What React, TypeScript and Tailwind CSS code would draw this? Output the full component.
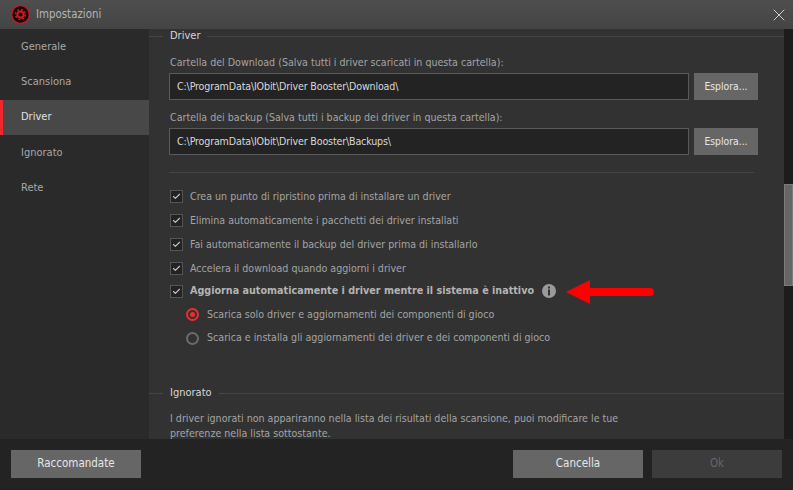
import React from 'react';
import { X, Check } from 'lucide-react';

const navItems = ['Generale', 'Scansiona', 'Driver', 'Ignorato', 'Rete'];

const checks = [
  'Crea un punto di ripristino prima di installare un driver',
  'Elimina automaticamente i pacchetti dei driver installati',
  'Fai automaticamente il backup del driver prima di installarlo',
  'Accelera il download quando aggiorni i driver',
];

const Logo = () => (
  <svg width="19" height="19" viewBox="0 0 19 19">
    <circle cx="9.5" cy="9.5" r="8.8" fill="#140808" stroke="#d0161c" strokeWidth="1.3" />
    <circle cx="9.5" cy="9.5" r="3.2" fill="none" stroke="#c81a20" strokeWidth="2.2" />
    <circle cx="9.5" cy="9.5" r="5" fill="none" stroke="#c81a20" strokeWidth="1.4" strokeDasharray="2 1.9" />
    <circle cx="9.5" cy="9.5" r="1.2" fill="#140808" />
  </svg>
);

const InfoIcon = () => (
  <svg width="14" height="14" viewBox="0 0 14 14" className="ml-[8px] shrink-0">
    <circle cx="7" cy="7" r="7" fill="#9a9a9a" />
    <rect x="6" y="2.5" width="2" height="2" fill="#323232" />
    <rect x="6" y="5.5" width="2" height="6" fill="#323232" />
  </svg>
);

const Arrow = () => (
  <svg width="88" height="24" viewBox="0 0 88 24" className="absolute left-[417px] top-0">
    <path d="M0 12 L24 0 V8 H84 a4 4 0 0 1 0 8 H24 V24 Z" fill="#fe0000" />
  </svg>
);

const Section = ({ title, children }: { title: string; children: React.ReactNode }) => (
  <div>
    <div className="flex items-center gap-[7px]">
      <div className="h-px w-[14px] bg-[#454545]" />
      <span className="text-[11px] leading-[14px] text-[#d6d6d6]">{title}</span>
      <div className="h-px flex-1 bg-[#454545]" />
    </div>
    {children}
  </div>
);

const PathRow = ({ label, value }: { label: string; value: string }) => (
  <div>
    <div className="pl-[21px] text-[10.6px] leading-[14px] text-[#a4a4a4]">{label}</div>
    <div className="mt-[4px] flex gap-[5px] pl-[20px]">
      <div className="flex h-[27px] w-[520px] items-center border border-[#5a5a5a] bg-[#232323] pl-[7px] text-[10.6px] tracking-[-0.15px] text-[#d8d8d8]">
        {value}
      </div>
      <button className="h-[27px] w-[64px] bg-[#666666] text-[10.3px] text-[#e6e6e6]">Esplora...</button>
    </div>
  </div>
);

const CheckBox = () => (
  <div className="flex h-[13px] w-[13px] shrink-0 items-center justify-center border border-[#555555] bg-[#232323]">
    <Check size={9} strokeWidth={3} className="text-[#c4c4c4]" />
  </div>
);

const CheckRow = ({ label }: { label: string }) => (
  <div className="flex h-[24px] items-center gap-[7px] pl-[21px]">
    <CheckBox />
    <span className="pt-[2px] text-[10.6px] text-[#a4a4a4]">{label}</span>
  </div>
);

const RadioRow = ({ label, on, height }: { label: string; on?: boolean; height: string }) => (
  <div className={`flex items-center gap-[8px] pl-[37px] ${height}`}>
    {on ? (
      <div className="flex h-[13px] w-[13px] items-center justify-center rounded-full border-2 border-[#f02c30]">
        <div className="h-[5px] w-[5px] rounded-full bg-[#f02c30]" />
      </div>
    ) : (
      <div className="h-[13px] w-[13px] rounded-full border-2 border-[#6c6c6c]" />
    )}
    <span className="text-[10.6px] text-[#a4a4a4]">{label}</span>
  </div>
);

export default function App() {
  return (
    <div className="flex h-[490px] w-[793px] flex-col overflow-hidden bg-[#323232] font-['DejaVu_Sans_Condensed','DejaVu_Sans',sans-serif]">
      <header className="flex h-[29px] shrink-0 items-center bg-gradient-to-b from-[#4e4e4e] to-[#444444] pl-[11px] pr-[4px]">
        <Logo />
        <span className="ml-[6px] text-[11.4px] text-[#b4b4b4]">Impostazioni</span>
        <X size={20} strokeWidth={1.2} className="ml-auto text-[#cfcfcf]" />
      </header>

      <div className="flex min-h-0 flex-1">
        <nav className="w-[149px] shrink-0 bg-[#2a2a2a] pt-[0.4px]">
          {navItems.map((item) => (
            <div
              key={item}
              className={
                item === 'Driver'
                  ? 'flex h-[35.3px] items-center border-l-[3px] border-[#f0282d] bg-[#484848] pl-[18px] text-[11px] text-[#e0e0e0]'
                  : 'flex h-[35.3px] items-center pl-[21px] text-[11px] text-[#a8a8a8]'
              }
            >
              {item}
            </div>
          ))}
        </nav>

        <main className="min-w-0 flex-1 overflow-hidden">
          <Section title="Driver">
            <div className="mt-[12px] flex flex-col gap-[10px]">
              <PathRow
                label="Cartella del Download (Salva tutti i driver scaricati in questa cartella):"
                value="C:\ProgramData\IObit\Driver Booster\Download\"
              />
              <PathRow
                label="Cartella dei backup (Salva tutti i backup dei driver in questa cartella):"
                value="C:\ProgramData\IObit\Driver Booster\Backups\"
              />
            </div>
            <div className="ml-[20px] mt-[17px] h-px w-[585px] bg-[#454545]" />
            <div className="mt-[11px]">
              {checks.map((c) => (
                <CheckRow key={c} label={c} />
              ))}
              <div className="relative flex h-[23px] items-center gap-[7px] pl-[21px]">
                <CheckBox />
                <span className="flex items-center text-[10.7px] font-bold text-[#b4b4b4]">
                  Aggiorna automaticamente i driver mentre il sistema è inattivo
                  <InfoIcon />
                </span>
                <Arrow />
              </div>
              <RadioRow on height="h-[23px]" label="Scarica solo driver e aggiornamenti dei componenti di gioco" />
              <RadioRow height="h-[24px]" label="Scarica e installa gli aggiornamenti dei driver e dei componenti di gioco" />
            </div>
          </Section>
          <div className="mt-[36px]">
            <Section title="Ignorato">
              <p className="ml-[21px] mt-[11px] w-[470px] text-[10.6px] leading-[15px] text-[#a4a4a4]">
                I driver ignorati non appariranno nella lista dei risultati della scansione, puoi modificare le tue
                preferenze nella lista sottostante.
              </p>
            </Section>
          </div>
        </main>

        <div className="flex w-[9px] shrink-0 flex-col bg-[#1c1c1c]">
          <div className="mt-[155px] h-[102px] border border-[#7c7c7c] bg-[#666666]" />
        </div>
      </div>

      <footer className="flex h-[51px] shrink-0 items-start justify-between bg-[#232323] px-[11px] pt-[11px]">
        <button className="h-[28px] w-[130px] bg-[#666666] text-[11.5px] text-[#e6e6e6]">Raccomandate</button>
        <div className="flex gap-[9px]">
          <button className="h-[28px] w-[130px] bg-[#666666] text-[11.5px] text-[#e6e6e6]">Cancella</button>
          <button className="h-[28px] w-[130px] bg-[#3c3c3c] text-[11.5px] text-[#666666]">Ok</button>
        </div>
      </footer>
    </div>
  );
}
